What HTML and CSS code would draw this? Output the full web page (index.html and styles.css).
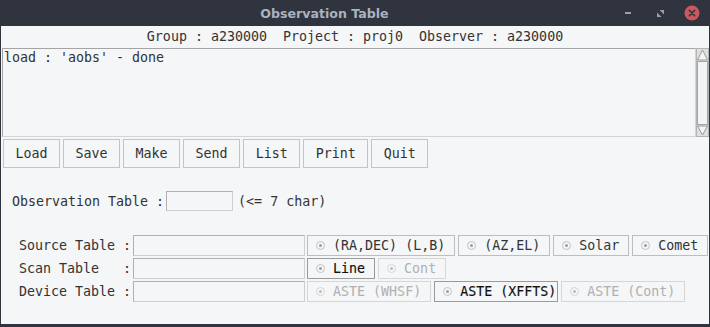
FILE: index.html
```html
<!DOCTYPE html>
<html>
<head>
<meta charset="utf-8">
<link rel="stylesheet" href="styles.css">
</head>
<body>
<div class="window">
  <div class="titlebar">
    <div class="title">Observation Table</div>
    <div class="controls">
      <span class="ctl"><span class="min"></span></span>
      <span class="ctl"><svg width="7" height="7" viewBox="0 0 7 7"><polygon points="2.5,0 7,0 7,4.5" fill="#9aa0ab"/><polygon points="0,2.5 0,7 4.5,7" fill="#9aa0ab"/></svg></span>
      <span class="ctl"><svg width="16" height="16" viewBox="0 0 16 16"><circle cx="8" cy="8" r="7.5" fill="#cc575d"/><path d="M5.3 5.3 L10.7 10.7 M10.7 5.3 L5.3 10.7" stroke="#2f343f" stroke-width="1.6" stroke-linecap="round"/></svg></span>
    </div>
  </div>
  <div class="main">
    <div class="info">Group : a230000  Project : proj0  Observer : a230000</div>
    <div class="log-row">
      <div class="log">load : 'aobs' - done</div>
      <div class="scroll">
        <svg width="13" height="89" viewBox="0 0 13 89">
          <rect x="0.5" y="0.5" width="12" height="88" fill="#dedfe0" stroke="#b4b4b4"/>
          <polygon points="6.5,2 11.5,12 1.5,12" fill="#f4f4f4" stroke="#9a9a9a"/>
          <rect x="1.5" y="13.5" width="10" height="63" fill="#f3f4f5" stroke="#a6a6a6"/>
          <polygon points="1.5,78 11.5,78 6.5,87" fill="#f4f4f4" stroke="#9a9a9a"/>
        </svg>
      </div>
    </div>
    <div class="toolbar">
      <button class="btn">Load</button>
      <button class="btn">Save</button>
      <button class="btn">Make</button>
      <button class="btn">Send</button>
      <button class="btn">List</button>
      <button class="btn">Print</button>
      <button class="btn">Quit</button>
    </div>
    <div class="obs-row">
      <span class="label">Observation Table :</span>
      <span class="field obs-field"></span>
      <span class="hint">(&lt;= 7 char)</span>
    </div>
    <div class="tables">
      <div class="trow">
        <span class="label">Source Table :</span>
        <span class="field wide"></span>
        <div class="radios">
          <span class="radio"><span class="dot"></span>(RA,DEC) (L,B)</span>
          <span class="radio"><span class="dot"></span>(AZ,EL)</span>
          <span class="radio"><span class="dot"></span>Solar</span>
          <span class="radio"><span class="dot"></span>Comet</span>
        </div>
      </div>
      <div class="trow">
        <span class="label">Scan Table   :</span>
        <span class="field wide"></span>
        <div class="radios">
          <span class="radio sel"><span class="dot"></span>Line</span>
          <span class="radio off"><span class="dot"></span>Cont</span>
        </div>
      </div>
      <div class="trow">
        <span class="label">Device Table :</span>
        <span class="field wide"></span>
        <div class="radios">
          <span class="radio off"><span class="dot"></span>ASTE (WHSF)</span>
          <span class="radio sel tight"><span class="dot"></span>ASTE (XFFTS)</span>
          <span class="radio off"><span class="dot"></span>ASTE (Cont)</span>
        </div>
      </div>
    </div>
  </div>
</div>
</body>
</html>
```
FILE: styles.css
```css
* { box-sizing: border-box; }
html, body { margin: 0; padding: 0; }
body {
  width: 710px;
  height: 327px;
  overflow: hidden;
  background: #2f343f;
  font-family: "DejaVu Sans Mono", "Liberation Mono", monospace;
  font-size: 13.3px;
  color: #333333;
}
.window {
  width: 710px;
  height: 327px;
  display: flex;
  flex-direction: column;
  background: #2f343f;
  padding: 0 1px 3px 1px;
}
.titlebar {
  height: 26px;
  display: flex;
  align-items: stretch;
  margin: 0 -1px;
}
.title {
  flex: 1;
  padding-left: 37px;
  padding-top: 1px;
  text-align: center;
  line-height: 26px;
  font-family: "DejaVu Sans", sans-serif;
  font-weight: bold;
  font-size: 12.6px;
  color: #aab2be;
}
.controls {
  display: flex;
  padding-right: 2px;
}
.ctl {
  width: 32px;
  display: flex;
  align-items: center;
  justify-content: center;
}
.min {
  display: block;
  width: 6px;
  height: 2px;
  background: #9aa0ab;
}
.main {
  flex: 1;
  background: #f5f6f7;
  display: flex;
  flex-direction: column;
}
.info {
  height: 22px;
  line-height: 22px;
  text-align: center;
  white-space: pre;
}
.log-row {
  height: 89px;
  display: flex;
  padding-left: 1px;
}
.log {
  flex: 1;
  border: 1px solid #d4d4d4;
  border-top-color: #a4a4a4;
  border-left-color: #a4a4a4;
  padding: 1px 1px;
  line-height: 15.5px;
  white-space: pre;
}
.scroll {
  width: 13px;
  display: flex;
}
.scroll svg { display: block; }
.toolbar {
  display: flex;
  gap: 3px;
  margin-top: 2px;
  padding-left: 2px;
}
.btn {
  height: 29px;
  padding: 0 11.5px;
  border: 1px solid #c4c4c4;
  background: #f5f6f7;
  font: inherit;
  color: #333333;
  border-radius: 0;
}
.obs-row {
  margin-top: 23px;
  height: 20px;
  display: flex;
  align-items: center;
  padding-left: 11px;
}
.field {
  display: block;
  flex-shrink: 0;
  border: 1px solid #cfcfcf;
  border-top-color: #b0b0b0;
  border-left-color: #b0b0b0;
  background: #f5f6f7;
}
.obs-field {
  width: 67px;
  height: 20px;
  margin-left: 2px;
}
.hint { margin-left: 5px; }
.tables {
  margin-top: 24px;
  display: flex;
  flex-direction: column;
  gap: 2px;
}
.trow {
  height: 21px;
  display: flex;
  align-items: stretch;
  padding-left: 18px;
}
.trow .label {
  white-space: pre;
  line-height: 21px;
  flex-shrink: 0;
}
.wide {
  width: 172px;
  margin-left: 2px;
}
.radios {
  display: flex;
  gap: 3px;
  margin-left: 2px;
}
.radio {
  display: flex;
  align-items: center;
  flex-shrink: 0;
  padding: 0 9px 0 8px;
  border: 1px solid #bdbdbd;
  white-space: pre;
}
.dot {
  width: 9px;
  height: 9px;
  border-radius: 50%;
  border: 1px solid #c2c2c2;
  margin-right: 8px;
  display: flex;
  align-items: center;
  justify-content: center;
}
.dot::after {
  content: "";
  width: 3px;
  height: 3px;
  border-radius: 50%;
  background: #9d9d9d;
}
.radio.off {
  color: #b0b0b0;
  border-color: #d6d6d6;
}
.radio.off .dot { border-color: #d6d6d6; }
.radio.off .dot::after { background: #bdbdbd; }
.radio.sel {
  color: #111111;
  border-color: #9a9a9a;
  -webkit-text-stroke: 0.15px #111111;
}
.radio.tight { padding-right: 1px; }
```
